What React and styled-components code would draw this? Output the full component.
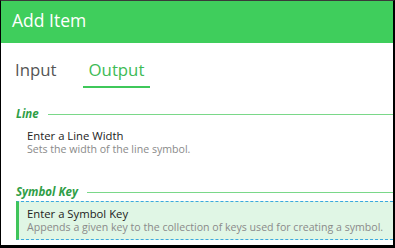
import styled, { createGlobalStyle } from "styled-components"

const GlobalStyle = createGlobalStyle`
    html, body {
        margin: 0;
        padding: 0;
        background: #fff;
    }
    * {
        box-sizing: border-box;
    }
`

const Frame = styled.div`
    width: 395px;
    height: 248px;
    display: flex;
    flex-direction: column;
    overflow: hidden;
    background: #fff;
    border-top: 1px solid #3a3a3a;
    border-left: 1px solid #000;
    border-right: 2px solid #000;
    border-bottom: 3px solid #000;
    font-family: "Open Sans", "Noto Sans", sans-serif;
`

const Header = styled.div`
    height: 42px;
    margin-left: -1px;
    padding: 7px 12px 0;
    background: #3fce5c;
    color: #fff;
    font-size: 17.5px;
    line-height: 24px;
    flex-shrink: 0;
`

const Tabs = styled.div`
    display: flex;
    gap: 20px;
    margin-top: 15px;
    padding-left: 8px;
`

const Tab = styled.div`
    padding: 0 6px 4px;
    font-size: 16.8px;
    line-height: 24px;
    color: ${(props) => (props.active ? "#3dbb55" : "#555")};
    border-bottom: 2px solid ${(props) => (props.active ? "#3fc85a" : "transparent")};
`

const Section = styled.div`
    margin-top: ${(props) => props.gap}px;
`

const SectionHead = styled.div`
    display: flex;
    align-items: center;
    gap: 9px;
    height: 14px;
    margin-bottom: 2px;
    padding-left: 15px;
`

const SectionLabel = styled.span`
    font-size: 11.5px;
    line-height: 14px;
    font-weight: 700;
    font-style: italic;
    color: #2f9e46;
`

const Rule = styled.div`
    flex: 1;
    height: 1px;
    background: #7ad889;
`

const Item = styled.div`
    margin-left: 15px;
    padding: 4px 8px 5px;
    border-left: 3px solid ${(props) => (props.selected ? "#3fc45a" : "transparent")};
    border-top: 1px dashed ${(props) => (props.selected ? "#3aa9de" : "transparent")};
    border-bottom: 1px dashed ${(props) => (props.selected ? "#3aa9de" : "transparent")};
    background: ${(props) => (props.selected ? "#e0f6e5" : "transparent")};
`

const ItemTitle = styled.div`
    font-size: 11.3px;
    line-height: 15px;
    color: #222;
    white-space: nowrap;
`

const ItemDesc = styled.div`
    font-size: 10.6px;
    line-height: 13px;
    color: #8a8a8a;
    white-space: nowrap;
`

const sections = [
    {
        name: "Line",
        gap: 19,
        items: [
            { title: "Enter a Line Width", desc: "Sets the width of the line symbol." },
        ],
    },
    {
        name: "Symbol Key",
        gap: 23,
        items: [
            {
                title: "Enter a Symbol Key",
                desc: "Appends a given key to the collection of keys used for creating a symbol.",
                selected: true,
            },
        ],
    },
]

function App() {
    return (
        <>
            <GlobalStyle />
            <Frame>
                <Header>Add Item</Header>
                <Tabs>
                    <Tab>Input</Tab>
                    <Tab active>Output</Tab>
                </Tabs>
                {sections.map((section) => (
                    <Section key={section.name} gap={section.gap}>
                        <SectionHead>
                            <SectionLabel>{section.name}</SectionLabel>
                            <Rule />
                        </SectionHead>
                        {section.items.map((item) => (
                            <Item key={item.title} selected={item.selected}>
                                <ItemTitle>{item.title}</ItemTitle>
                                <ItemDesc>{item.desc}</ItemDesc>
                            </Item>
                        ))}
                    </Section>
                ))}
            </Frame>
        </>
    )
}

export default App
